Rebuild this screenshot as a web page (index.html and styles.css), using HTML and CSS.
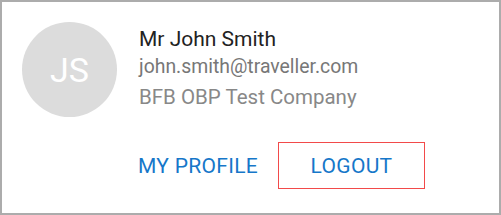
FILE: index.html
```html
<!DOCTYPE html>
<html>
<head>
<meta charset="utf-8">
<link rel="stylesheet" href="styles.css">
</head>
<body>
<div class="card">
  <div class="user">
    <div class="avatar">JS</div>
    <div class="info">
      <div class="name">Mr John Smith</div>
      <div class="email">john.smith@traveller.com</div>
      <div class="company">BFB OBP Test Company</div>
    </div>
  </div>
  <div class="actions">
    <a class="btn btn-profile">MY PROFILE</a>
    <a class="btn btn-logout">LOGOUT</a>
  </div>
</div>
</body>
</html>
```
FILE: styles.css
```css
html, body {
  margin: 0;
  padding: 0;
  background: #fff;
}
.card {
  box-sizing: border-box;
  width: 501px;
  height: 215px;
  border: 2px solid #acacac;
  font-family: Roboto, "Liberation Sans", sans-serif;
  padding: 20px 0 0 20px;
}
.user {
  display: flex;
  align-items: flex-start;
}
.avatar {
  width: 95px;
  height: 95px;
  border-radius: 50%;
  background: #dcdcdc;
  color: #fff;
  font-size: 34px;
  display: flex;
  align-items: center;
  justify-content: center;
  flex: none;
}
.info {
  margin-left: 22px;
  padding-top: 5px;
}
.name {
  font-size: 21px;
  color: #222;
  line-height: 24px;
}
.email {
  font-size: 19.4px;
  color: #777;
  line-height: 24px;
  margin-top: 4px;
}
.company {
  font-size: 20.5px;
  color: #888;
  line-height: 26px;
  margin-top: 5px;
}
.actions {
  display: flex;
  margin-top: 25px;
  margin-left: 116px;
}
.btn {
  box-sizing: border-box;
  height: 47px;
  display: flex;
  align-items: center;
  justify-content: center;
  font-size: 21px;
  color: #1677c9;
  letter-spacing: 0.3px;
}
.btn-profile {
  width: 122px;
  justify-content: flex-start;
}
.btn-logout {
  width: 147px;
  margin-left: 18px;
  border: 1.5px solid #f24a4a;
}
```
